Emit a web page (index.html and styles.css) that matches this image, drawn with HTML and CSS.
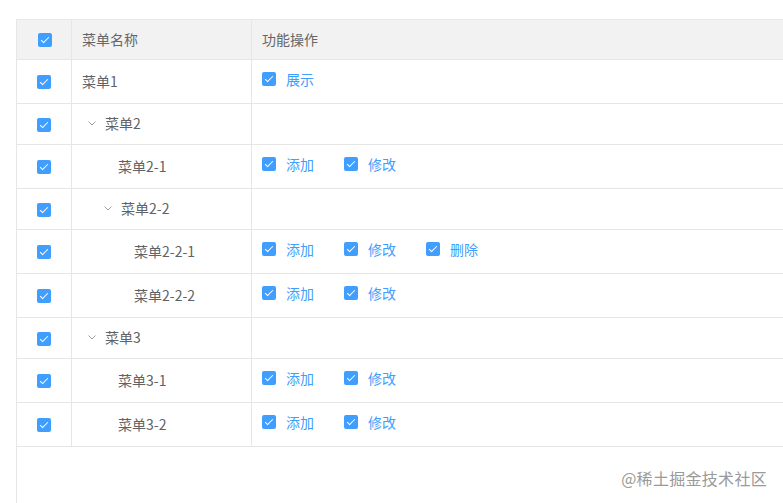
FILE: index.html
```html
<!DOCTYPE html>
<html lang="zh-CN">
<head>
<meta charset="utf-8">
<title>菜单权限</title>
<link rel="stylesheet" href="styles.css">
</head>
<body>
<div class="page">
  <div class="table">
    <div class="row head">
      <div class="c1"><span class="cb"></span></div>
      <div class="c2">菜单名称</div>
      <div class="c3">功能操作</div>
    </div>

    <div class="row">
      <div class="c1"><span class="cb"></span></div>
      <div class="c2"><span class="name">菜单1</span></div>
      <div class="c3 ops"><label class="op"><span class="cb"></span><span class="op-text">展示</span></label></div>
    </div>

    <div class="row short">
      <div class="c1"><span class="cb"></span></div>
      <div class="c2"><span class="expand"><svg width="8" height="5" viewBox="0 0 8 5"><polyline points="0.5,0.5 4,4 7.5,0.5" fill="none" stroke="#a0a0a0" stroke-width="1"/></svg></span><span class="name">菜单2</span></div>
      <div class="c3"></div>
    </div>

    <div class="row">
      <div class="c1"><span class="cb"></span></div>
      <div class="c2"><span class="indent l1"></span><span class="placeholder"></span><span class="name">菜单2-1</span></div>
      <div class="c3 ops">
        <label class="op"><span class="cb"></span><span class="op-text">添加</span></label>
        <label class="op"><span class="cb"></span><span class="op-text">修改</span></label>
      </div>
    </div>

    <div class="row short">
      <div class="c1"><span class="cb"></span></div>
      <div class="c2"><span class="indent l1"></span><span class="expand"><svg width="8" height="5" viewBox="0 0 8 5"><polyline points="0.5,0.5 4,4 7.5,0.5" fill="none" stroke="#a0a0a0" stroke-width="1"/></svg></span><span class="name">菜单2-2</span></div>
      <div class="c3"></div>
    </div>

    <div class="row">
      <div class="c1"><span class="cb"></span></div>
      <div class="c2"><span class="indent l2"></span><span class="placeholder"></span><span class="name">菜单2-2-1</span></div>
      <div class="c3 ops">
        <label class="op"><span class="cb"></span><span class="op-text">添加</span></label>
        <label class="op"><span class="cb"></span><span class="op-text">修改</span></label>
        <label class="op"><span class="cb"></span><span class="op-text">删除</span></label>
      </div>
    </div>

    <div class="row">
      <div class="c1"><span class="cb"></span></div>
      <div class="c2"><span class="indent l2"></span><span class="placeholder"></span><span class="name">菜单2-2-2</span></div>
      <div class="c3 ops">
        <label class="op"><span class="cb"></span><span class="op-text">添加</span></label>
        <label class="op"><span class="cb"></span><span class="op-text">修改</span></label>
      </div>
    </div>

    <div class="row short">
      <div class="c1"><span class="cb"></span></div>
      <div class="c2"><span class="expand"><svg width="8" height="5" viewBox="0 0 8 5"><polyline points="0.5,0.5 4,4 7.5,0.5" fill="none" stroke="#a0a0a0" stroke-width="1"/></svg></span><span class="name">菜单3</span></div>
      <div class="c3"></div>
    </div>

    <div class="row">
      <div class="c1"><span class="cb"></span></div>
      <div class="c2"><span class="indent l1"></span><span class="placeholder"></span><span class="name">菜单3-1</span></div>
      <div class="c3 ops">
        <label class="op"><span class="cb"></span><span class="op-text">添加</span></label>
        <label class="op"><span class="cb"></span><span class="op-text">修改</span></label>
      </div>
    </div>

    <div class="row">
      <div class="c1"><span class="cb"></span></div>
      <div class="c2"><span class="indent l1"></span><span class="placeholder"></span><span class="name">菜单3-2</span></div>
      <div class="c3 ops">
        <label class="op"><span class="cb"></span><span class="op-text">添加</span></label>
        <label class="op"><span class="cb"></span><span class="op-text">修改</span></label>
      </div>
    </div>
  </div>
  <div class="watermark">@稀土掘金技术社区</div>
</div>
</body>
</html>
```

FILE: styles.css
```css
* { box-sizing: border-box; }

html, body {
  margin: 0;
  padding: 0;
  background: #ffffff;
  overflow: hidden;
}

body {
  font-family: "Noto Sans CJK SC", "Noto Sans", sans-serif;
  font-size: 14px;
  color: #606266;
}

.page {
  position: relative;
  width: 783px;
  height: 503px;
  padding: 19px 0 0 16px;
  overflow: hidden;
}

.table {
  width: 820px;
  height: 484px;
  border-left: 1px solid #e6e6e6;
  border-top: 1px solid #e8e8e8;
}

.row {
  display: flex;
  height: 44px;
  border-bottom: 1px solid #e6e6e6;
}

.row.short { height: 41px; }

.row.head {
  height: 40px;
  background: #f2f2f2;
  color: #666666;
}

.c1, .c2, .c3 {
  display: flex;
  align-items: center;
}

.c1 {
  width: 55px;
  justify-content: center;
  border-right: 1px solid #e6e6e6;
  padding-top: 1px;
}

.c2 {
  width: 180px;
  padding-left: 10px;
  border-right: 1px solid #e6e6e6;
  padding-bottom: 2px;
}

.c3 {
  flex: 1;
  padding-left: 10px;
}

.head .c1 { padding-left: 2px; }
.head .c2, .head .c3 { padding-top: 0; padding-bottom: 1px; }

.ops { padding-bottom: 6px; }

.cb {
  position: relative;
  display: inline-block;
  width: 14px;
  height: 14px;
  border-radius: 2px;
  background: #409eff;
  flex: none;
}

.ops .cb { margin-top: 1px; }

.cb::after {
  content: "";
  position: absolute;
  left: 5px;
  top: 2px;
  width: 3px;
  height: 7px;
  border: 1px solid #ffffff;
  border-left: 0;
  border-top: 0;
  transform: rotate(45deg);
}

.indent { display: inline-block; flex: none; }
.indent.l1 { width: 16px; }
.indent.l2 { width: 32px; }

.placeholder {
  display: inline-block;
  width: 20px;
  flex: none;
}

.expand {
  display: inline-flex;
  align-items: center;
  justify-content: center;
  width: 20px;
  height: 20px;
  margin-right: 3px;
  flex: none;
  padding-top: 1px;
}

.expand svg { display: block; }

.name { white-space: nowrap; }

.op {
  display: inline-flex;
  align-items: center;
  margin-right: 30px;
}

.op-text {
  margin-left: 10px;
  color: #409eff;
  white-space: nowrap;
}

.watermark {
  position: absolute;
  right: 16px;
  top: 467px;
  font-size: 16px;
  line-height: 22px;
  color: #9a9a9a;
  letter-spacing: 0.3px;
}
```
